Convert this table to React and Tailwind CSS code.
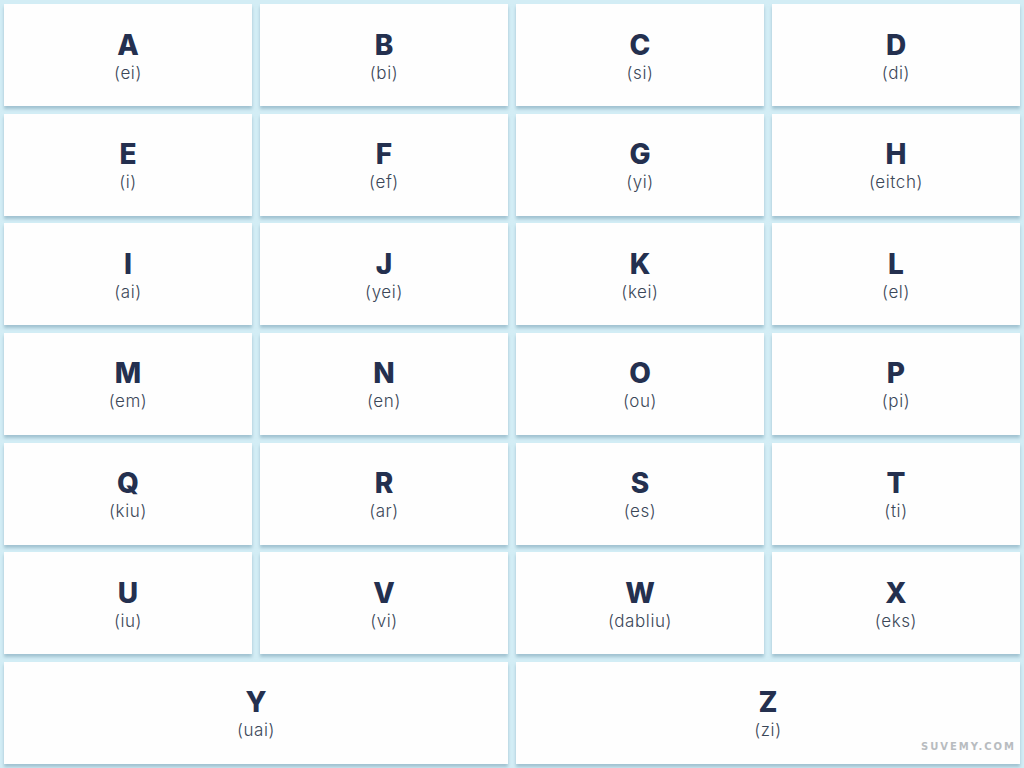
const LETTERS = [
  ['A', 'ei'], ['B', 'bi'], ['C', 'si'], ['D', 'di'],
  ['E', 'i'], ['F', 'ef'], ['G', 'yi'], ['H', 'eitch'],
  ['I', 'ai'], ['J', 'yei'], ['K', 'kei'], ['L', 'el'],
  ['M', 'em'], ['N', 'en'], ['O', 'ou'], ['P', 'pi'],
  ['Q', 'kiu'], ['R', 'ar'], ['S', 'es'], ['T', 'ti'],
  ['U', 'iu'], ['V', 'vi'], ['W', 'dabliu'], ['X', 'eks'],
  ['Y', 'uai'], ['Z', 'zi'],
];

function Card({ letter, sound, wide }) {
  return (
    <div
      className={
        'bg-[#fefefe] flex flex-col items-center justify-center pt-[2px] shadow-[0_3px_3px_rgba(120,160,180,0.55)] ' +
        (wide ? 'col-span-2' : '')
      }
    >
      <div className="text-[28px] leading-[32px] font-extrabold text-[#24304f]">{letter}</div>
      <div className="mt-[1px] text-[17px] leading-[22px] font-light tracking-[0.6px] text-[#3b4758]">({sound})</div>
    </div>
  );
}

export default function App() {
  return (
    <div
      className="relative w-[1024px] h-[768px] bg-[#d3edf5] p-[4px] overflow-hidden"
      style={{ fontFamily: 'Inter, "Open Sans", sans-serif' }}
    >
      <div className="grid grid-cols-4 grid-rows-7 gap-x-[8px] gap-y-[7.5px] h-[760px]">
        {LETTERS.map(([l, s], i) => (
          <Card key={l} letter={l} sound={s} wide={i >= 24} />
        ))}
      </div>
      <div className="absolute right-[8px] bottom-[14px] text-[10px] tracking-[2px] font-bold text-[#b8bcc0]" style={{ fontFamily: '"DejaVu Sans", sans-serif' }}>
        SUVEMY.COM
      </div>
    </div>
  );
}
